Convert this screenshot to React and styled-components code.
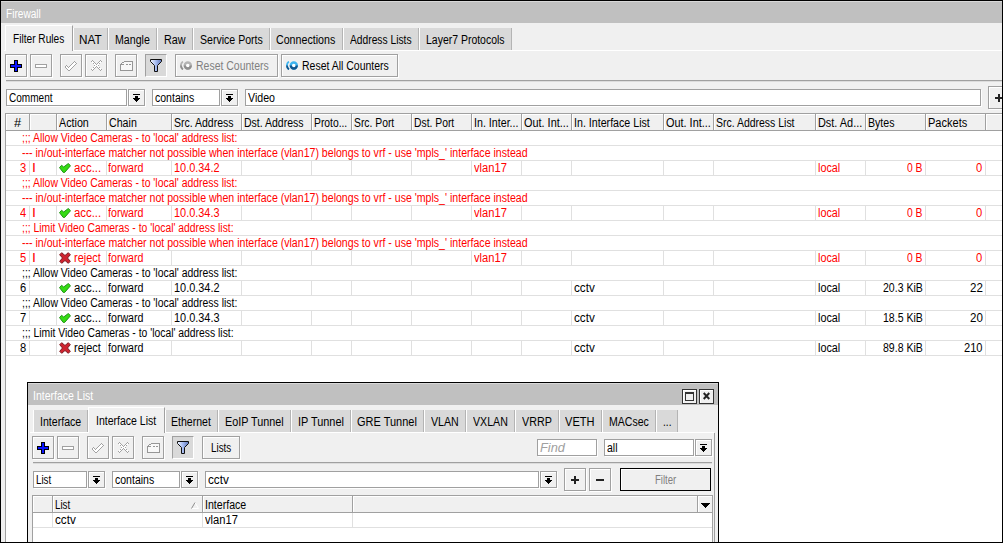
import React, { useLayoutEffect, useRef, useState } from "react";
import styled, { createGlobalStyle, css } from "styled-components";

const Global = createGlobalStyle`
  * { box-sizing: border-box; }
  body {
    margin: 0;
    overflow: hidden;
    background: #fff;
    color: #000;
    font: 12px/14px "Liberation Sans", Arial, sans-serif;
  }
`;

/* ---------- condensed interface text ---------- */

const LabelBox = styled.span`
  display: block;
  flex: none;
  width: ${(p) => p.$w}px;
  white-space: pre;
  font-style: ${(p) => (p.$italic ? "italic" : "normal")};
`;
const LabelInk = styled.span`
  display: inline-block;
  transform-origin: 0 50%;
`;

function Label({ w, italic, children }) {
  const ref = useRef(null);
  const [scale, setScale] = useState(0.85);
  useLayoutEffect(() => {
    const natural = ref.current.offsetWidth;
    if (natural) setScale((w + 0.5) / natural);
  }, [w, children]);
  return (
    <LabelBox $w={w} $italic={italic}>
      <LabelInk ref={ref} style={{ transform: `scaleX(${scale})` }}>
        {children}
      </LabelInk>
    </LabelBox>
  );
}

/* ---------- pixel icons ---------- */

const Svg = styled.svg`
  display: block;
  flex: none;
`;

function Pixels({ rows, colors }) {
  return (
    <Svg width={rows[0].length} height={rows.length} shapeRendering="crispEdges">
      {rows.flatMap((row, y) =>
        [...row].map((c, x) =>
          colors[c] ? <rect key={`${x}-${y}`} x={x} y={y} width="1" height="1" fill={colors[c]} /> : null
        )
      )}
    </Svg>
  );
}

const AddIcon = () => (
  <Svg width="12" height="12" shapeRendering="crispEdges">
    <path d="M4 0h4v4h4v4H8v4H4V8H0V4h4z" fill="#000" />
    <path d="M5 1h2v4h4v2H7v4H5V7H1V5h4z" fill="#0a14ff" />
  </Svg>
);
const RemoveIcon = () => (
  <Svg width="12" height="4" shapeRendering="crispEdges">
    <path d="M.5.5h11v3H.5z" fill="#fff" stroke="#a0a0a0" />
  </Svg>
);
const EnableIcon = () => (
  <Pixels
    colors={{ x: "#a2a2a2", w: "#fff" }}
    rows={[
      ".........x..",
      "........xwx.",
      ".......xwwwx",
      "......xwwwx.",
      ".x...xwwwx..",
      "xwx.xwwwx...",
      "xwwxwwwx....",
      ".xwwwwx.....",
      "..xwwx......",
      "...xx.......",
    ]}
  />
);
const DisableIcon = () => (
  <Pixels
    colors={{ x: "#a2a2a2", w: "#fff" }}
    rows={[
      ".x.......x.",
      "xwx.....xwx",
      ".wwx...xww.",
      "..xwx.xwx..",
      "...wwxww...",
      "...xwwwx...",
      "...wwxww...",
      "..xwx.xwx..",
      ".wwx...xww.",
      "xwx.....xwx",
      ".x.......x.",
    ]}
  />
);
const CommentIcon = () => (
  <Svg width="13" height="10" shapeRendering="crispEdges">
    <path d="M4 0h9v10H0V3h1V2h1V1h2z" fill="#969696" />
    <path d="M4 1h8v8H1V4h3z" fill="#f8f8f8" />
    <path d="M2 2h2v1H2z" fill="#f8f8f8" />
    <path d="M6 3h2v1H6z M9 3h2v1H9z" fill="#969696" />
  </Svg>
);
const FunnelIcon = () => (
  <Svg width="12" height="13">
    <defs>
      <linearGradient id="funnel" x1="0" x2="1">
        <stop offset="0" stopColor="#f2f7ff" />
        <stop offset=".5" stopColor="#a5baf0" />
        <stop offset="1" stopColor="#5e76b8" />
      </linearGradient>
    </defs>
    <path d="M.5.500h11v2L7.500 6.500v6h-3v-6L.5 2.500z" fill="url(#funnel)" stroke="#101010" />
  </Svg>
);
const CounterIcon = ({ color, dark }) => (
  <Svg width="12" height="9">
    <path d="M2.900.6C.2 2.600.2 6.400 2.900 8.400" fill="none" stroke={color} strokeWidth="1.800" />
    <path d="M1 4.500C1 6 1.700 7.500 2.900 8.400" fill="none" stroke={dark} strokeWidth="1.800" />
    <circle cx="7.800" cy="4.500" r="3" fill="#fff" stroke={color} strokeWidth="2.400" />
    <path d="M10.800 4.500a3 3 0 0 1-6 0" fill="none" stroke={dark} strokeWidth="2.300" />
  </Svg>
);
const DropIcon = () => (
  <Svg width="7" height="8" shapeRendering="crispEdges">
    <path d="M0 0h7v1H0z M2 2h3v2h2v1H6v1H5v1H4v1H3V7H2V6H1V5H0V4h2z" fill="#000" />
  </Svg>
);
const PlusGlyph = () => (
  <Svg width="8" height="8" shapeRendering="crispEdges">
    <path d="M3 0h2v3h3v2H5v3H3V5H0V3h3z" fill="#222" />
  </Svg>
);
const MinusGlyph = () => (
  <Svg width="8" height="2" shapeRendering="crispEdges">
    <path d="M0 0h8v2H0z" fill="#222" />
  </Svg>
);
const AcceptIcon = () => (
  <Svg width="12" height="10">
    <path d="M.5 4.600 2.600 2.300 4.700 4 9.300.5l2.200 2.200-5.800 6.700H4.200z" fill="#35dc14" stroke="#23921a" strokeLinejoin="round" />
  </Svg>
);
const RejectIcon = () => (
  <Svg width="12" height="12">
    <path
      d="M.7 2.700 2.700.7 6 3.500 9.300.7l2 2L8.500 6l2.800 3.300-2 2L6 8.500 2.700 11.300l-2-2L3.500 6z"
      fill="#cf2430"
      stroke="#7d1820"
      strokeLinejoin="round"
    />
  </Svg>
);
const SortIcon = () => (
  <Svg width="8" height="7">
    <path d="M4 .5 7.500 6.500H.5" stroke="#fff" fill="none" />
    <path d="M.5 6.500 4 .5" stroke="#8c8c8c" fill="none" />
  </Svg>
);
const MenuArrow = () => (
  <Svg width="9" height="5" shapeRendering="crispEdges">
    <path d="M0 0h9v1H8v1H7v1H6v1H5v1H4V4H3V3H2V2H1V1H0z" fill="#000" />
  </Svg>
);

/* ---------- window parts ---------- */

const Screen = styled.div`
  position: relative;
  width: 1003px;
  height: 543px;
  border: 1px solid #000;
  overflow: hidden;
  background: #f0f0f0;
`;
const FirewallWindow = styled.section`
  display: flex;
  flex-direction: column;
  height: 541px;
`;
const InterfaceWindow = styled.section`
  position: absolute;
  left: 26px;
  top: 381px;
  width: 692px;
  height: 170px;
  border: 1px solid #000;
  background: #f0f0f0;
  display: flex;
  flex-direction: column;
`;
const Panel = styled.div`
  display: flex;
  flex-direction: column;
  flex: 1;
  margin-right: 3px;
  border-right: 1px solid #a0a0a0;
`;
const TitleBar = styled.header`
  display: flex;
  align-items: center;
  flex: none;
  height: ${(p) => p.$h}px;
  padding: ${(p) => p.$pad};
  border-top: 1px solid #d8d8d8;
  background: #c0c0c0;
  color: #fff;
`;
const TitleButtons = styled.div`
  display: flex;
  gap: 2px;
  margin-left: auto;
`;
const TitleButton = styled.div`
  width: 15px;
  height: 15px;
  border: 1px solid #333;
  background: #f0f0f0;
  box-shadow: inset 1px 1px #fff;
  display: flex;
  align-items: center;
  justify-content: center;
`;
const TabStrip = styled.nav`
  display: flex;
  align-items: flex-end;
  flex: none;
  height: ${(p) => p.$h}px;
  padding-left: ${(p) => p.$pad}px;
  margin-left: ${(p) => p.$left}px;
  margin-right: ${(p) => p.$right || 0}px;
  border-bottom: 1px solid #fff;
`;
const Tab = styled.div`
  display: flex;
  flex: none;
  width: ${(p) => p.$w}px;
  height: 22px;
  padding: 5px 0 0 ${(p) => p.$pad}px;
  background: #d9d9d9;
  border-left: 1px solid #fff;
  border-right: 1px solid #b4b4b4;
  ${(p) =>
    p.$active &&
    css`
      height: 26px;
      margin-bottom: -1px;
      padding-top: 6px;
      background: #f0f0f0;
      border-top: 1px solid #fff;
      border-right-color: #a0a0a0;
    `}
`;
const Bar = styled.div`
  display: flex;
  align-items: center;
  flex: none;
  height: ${(p) => p.$h}px;
  padding: ${(p) => p.$pad};
`;
const Rule = styled.div`
  flex: none;
  height: 2px;
  margin: ${(p) => p.$m};
  border-top: 1px solid #a0a0a0;
  border-bottom: 1px solid #dcdcdc;
`;
const Button = styled.div`
  display: flex;
  align-items: center;
  justify-content: ${(p) => (p.$start ? "flex-start" : "center")};
  gap: 4px;
  flex: none;
  width: ${(p) => p.$w || 22}px;
  height: 23px;
  margin-left: ${(p) => p.$gap || 0}px;
  padding-left: ${(p) => (p.$start ? 4 : 0)}px;
  border: 1px solid ${(p) => (p.$strong ? "#000" : "#a0a0a0")};
  background: #f0f0f0;
  color: ${(p) => (p.$muted ? "#808080" : "#000")};
  box-shadow: ${(p) => (p.$strong ? "inset 1px 1px #fff" : "inset 1px 1px #fff, 1px 1px #fff")};
  ${(p) =>
    p.$pressed &&
    css`
      background: #d9d9d9;
      border-color: #a0a0a0 #fff #fff #a0a0a0;
      box-shadow: none;
    `}
`;
const Field = styled.div`
  display: flex;
  align-items: center;
  flex: none;
  width: ${(p) => p.$w}px;
  height: 17px;
  margin-left: ${(p) => p.$gap || 0}px;
  padding-left: 2px;
  border: 1px solid #a0a0a0;
  background: #fff;
  box-shadow: 1px 1px #fff;
  color: ${(p) => (p.$muted ? "#a0a0a0" : "#000")};
`;
const Drop = styled.div`
  display: flex;
  align-items: center;
  justify-content: center;
  flex: none;
  width: 17px;
  height: 17px;
  margin-left: 1px;
  border: 1px solid #a0a0a0;
  background: #f0f0f0;
  box-shadow: inset 1px 1px #fff, 1px 1px #fff;
`;

/* ---------- tables ---------- */

const Table = styled.div`
  flex: 1;
  margin: ${(p) => p.$m};
  border-left: 1px solid #a0a0a0;
  border-right: ${(p) => (p.$closed ? "1px solid #a0a0a0" : "0")};
  background: #fff;
  overflow: hidden;
`;
const HeadRow = styled.div`
  display: flex;
  height: 18px;
  border-top: 1px solid #a0a0a0;
  border-bottom: 1px solid #a0a0a0;
  background: #f0f0f0;
`;
const HeadCell = styled.div`
  display: flex;
  align-items: center;
  flex: ${(p) => (p.$w ? "none" : "1")};
  width: ${(p) => (p.$w ? p.$w + "px" : "auto")};
  padding: 2px 3px 0 ${(p) => p.$pad ?? 2}px;
  border-right: ${(p) => (p.$w ? "1px solid #a0a0a0" : "0")};
  box-shadow: inset 1px 1px #fff;
  overflow: hidden;
`;
const DataRow = styled.div`
  display: flex;
  height: 15px;
  border-bottom: 1px solid #e0e0e0;
  color: ${(p) => (p.$invalid ? "#ff0000" : "#000")};
  ${(p) => p.$note && css`padding-left: 16px;`}
`;
const Cell = styled.div`
  display: flex;
  align-items: center;
  gap: 3px;
  flex: none;
  width: ${(p) => p.$w}px;
  padding: 0 ${(p) => (p.$end ? 3 : 2)}px 0 ${(p) => p.$pad ?? 2}px;
  justify-content: ${(p) => (p.$end ? "flex-end" : "flex-start")};
  border-right: 1px solid #e0e0e0;
  overflow: hidden;
`;
const Spacer = styled.div`
  flex: 1;
`;

const columns = [
  { w: 24, title: "#", tw: 7, pad: 8, key: "num", end: true },
  { w: 27, title: "", tw: 0, key: "flag" },
  { w: 50, title: "Action", tw: 29, key: "action" },
  { w: 65, title: "Chain", tw: 27, key: "chain" },
  { w: 70, title: "Src. Address", tw: 59, key: "src" },
  { w: 70, title: "Dst. Address", tw: 59 },
  { w: 40, title: "Proto...", tw: 33 },
  { w: 60, title: "Src. Port", tw: 40 },
  { w: 60, title: "Dst. Port", tw: 40 },
  { w: 50, title: "In. Inter...", tw: 44, key: "inIf" },
  { w: 50, title: "Out. Int...", tw: 44 },
  { w: 92, title: "In. Interface List", tw: 75, key: "inList" },
  { w: 50, title: "Out. Int...", tw: 44 },
  { w: 102, title: "Src. Address List", tw: 78 },
  { w: 50, title: "Dst. Ad...", tw: 44, key: "dst" },
  { w: 60, title: "Bytes", tw: 26, key: "bytes", end: true },
  { w: 60, title: "Packets", tw: 39, key: "packets", end: true },
];

const widths = {
  I: 3, "acc...": 27, reject: 26, forward: 35, "10.0.34.2": 45, "10.0.34.3": 45, vlan17: 32,
  cctv: 20, local: 22, "0 B": 15, "20.3 KiB": 39, "18.5 KiB": 39, "89.8 KiB": 39, 0: 6, 22: 12, 20: 12, 210: 18,
};

const rules = [
  { num: "3", flag: "I", action: "acc...", src: "10.0.34.2", inIf: "vlan17", bytes: "0 B", packets: "0" },
  { num: "4", flag: "I", action: "acc...", src: "10.0.34.3", inIf: "vlan17", bytes: "0 B", packets: "0" },
  { num: "5", flag: "I", action: "reject", inIf: "vlan17", bytes: "0 B", packets: "0" },
  { num: "6", action: "acc...", src: "10.0.34.2", inList: "cctv", bytes: "20.3 KiB", packets: "22" },
  { num: "7", action: "acc...", src: "10.0.34.3", inList: "cctv", bytes: "18.5 KiB", packets: "20" },
  { num: "8", action: "reject", inList: "cctv", bytes: "89.8 KiB", packets: "210" },
].map((r) => ({ chain: "forward", dst: "local", ...r }));

function FilterRule({ rule }) {
  const invalid = rule.flag === "I";
  const accept = rule.action !== "reject";
  return (
    <>
      <DataRow $note $invalid={invalid}>
        <Label w={accept ? 215 : 211}>
          {`;;; ${accept ? "Allow" : "Limit"} Video Cameras - to 'local' address list:`}
        </Label>
      </DataRow>
      {invalid && (
        <DataRow $note $invalid>
          <Label w={505.500}>
            --- in/out-interface matcher not possible when interface (vlan17) belongs to vrf - use 'mpls_' interface instead
          </Label>
        </DataRow>
      )}
      <DataRow $invalid={invalid}>
        {columns.map((c, i) => (
          <Cell key={i} $w={c.w} $end={c.end} $pad={c.key === "chain" ? 1 : 2}>
            {c.key === "action" && (accept ? <AcceptIcon /> : <RejectIcon />)}
            {rule[c.key] && <Label w={widths[rule[c.key]] || 6}>{rule[c.key]}</Label>}
          </Cell>
        ))}
      </DataRow>
    </>
  );
}

/* tab: title, tab width, left padding, text width */
const firewallTabs = [
  ["Filter Rules", 68, 7, 51, true],
  ["NAT", 35, 5, 22],
  ["Mangle", 49, 6, 34],
  ["Raw", 36, 6, 21],
  ["Service Ports", 77, 6, 62],
  ["Connections", 73, 5, 59],
  ["Address Lists", 76, 6, 61],
  ["Layer7 Protocols", 93, 6, 78],
];
const interfaceTabs = [
  ["Interface", 55, 6, 41],
  ["Interface List", 77, 7, 60, true],
  ["Ethernet", 53, 5, 39],
  ["EoIP Tunnel", 73, 6, 58],
  ["IP Tunnel", 60, 6, 45],
  ["GRE Tunnel", 73, 5, 59],
  ["VLAN", 42, 6, 27],
  ["VXLAN", 49, 6, 34],
  ["VRRP", 44, 6, 29],
  ["VETH", 43, 5, 29],
  ["MACsec", 54, 6, 39],
  ["...", 22, 6, 8],
];

const Tabs = ({ items, ...rest }) => (
  <TabStrip {...rest}>
    {items.map(([name, w, pad, tw, active]) => (
      <Tab key={name} $w={w} $pad={pad} $active={active}>
        <Label w={tw}>{name}</Label>
      </Tab>
    ))}
  </TabStrip>
);

const EditButtons = () => (
  <>
    <Button><AddIcon /></Button>
    <Button $gap={3}><RemoveIcon /></Button>
    <Button $gap={8}><EnableIcon /></Button>
    <Button $gap={3}><DisableIcon /></Button>
    <Button $gap={8}><CommentIcon /></Button>
    <Button $gap={8} $pressed><FunnelIcon /></Button>
  </>
);

export default function App() {
  return (
    <>
      <Global />
      <Screen>
        <FirewallWindow>
          <TitleBar $h={22} $pad="3px 0 0 5px">
            <Label w={34}>Firewall</Label>
          </TitleBar>
          <Tabs items={firewallTabs} $h={28} $pad={1} $left={3} />
          <Bar $h={29} $pad="0 0 0 4px">
            <EditButtons />
            <Button $gap={8} $w={103} $muted $start>
              <CounterIcon color="#b4b4b4" dark="#8f8f8f" />
              <Label w={72}>Reset Counters</Label>
            </Button>
            <Button $gap={3} $w={117} $start>
              <CounterIcon color="#3db4ef" dark="#12558d" />
              <Label w={86}>Reset All Counters</Label>
            </Button>
          </Bar>
          <Rule $m="0 0 0 5px" />
          <Bar $h={31} $pad="0 0 0 5px">
            <Field $w={121}><Label w={43}>Comment</Label></Field>
            <Drop><DropIcon /></Drop>
            <Field $w={68} $gap={7}><Label w={39}>contains</Label></Field>
            <Drop><DropIcon /></Drop>
            <Field $w={736} $gap={7}><Label w={26}>Video</Label></Field>
            <Button $gap={7}><PlusGlyph /></Button>
          </Bar>
          <Table $m="0 0 0 4px">
            <HeadRow>
              {columns.map((c, i) => (
                <HeadCell key={i} $w={c.w} $pad={c.pad}>
                  <Label w={c.tw}>{c.title}</Label>
                </HeadCell>
              ))}
              <HeadCell />
            </HeadRow>
            {rules.map((r) => (
              <FilterRule key={r.num} rule={r} />
            ))}
          </Table>
        </FirewallWindow>

        <InterfaceWindow>
          <TitleBar $h={22} $pad="3px 4px 0 5px">
            <Label w={60}>Interface List</Label>
            <TitleButtons>
              <TitleButton>
                <Svg width="9" height="9" shapeRendering="crispEdges">
                  <path d="M0 0h9v9H0z M1 2v6h7V2z" fillRule="evenodd" fill="#333" />
                </Svg>
              </TitleButton>
              <TitleButton>
                <Svg width="7" height="8">
                  <path d="M.7 1l5.600 6M6.300 1 .7 7" stroke="#222" strokeWidth="2" />
                </Svg>
              </TitleButton>
            </TitleButtons>
          </TitleBar>
          <Tabs items={interfaceTabs} $h={28} $pad={3} $left={2} $right={4} />
          <Panel>
            <Bar $h={29} $pad="0 2px 0 4px">
              <EditButtons />
              <Button $gap={8} $w={38}><Label w={20}>Lists</Label></Button>
              <Spacer />
              <Field $w={60} $muted><Label w={24} italic>Find</Label></Field>
              <Field $w={90} $gap={7}><Label w={10}>all</Label></Field>
              <Drop><DropIcon /></Drop>
            </Bar>
            <Rule $m="0 2px 0 5px" />
            <Bar $h={31} $pad="0 3px 0 5px">
              <Field $w={54}><Label w={15}>List</Label></Field>
              <Drop><DropIcon /></Drop>
              <Field $w={68} $gap={7}><Label w={39}>contains</Label></Field>
              <Drop><DropIcon /></Drop>
              <Field $w={334} $gap={7}><Label w={20}>cctv</Label></Field>
              <Drop><DropIcon /></Drop>
              <Button $gap={7}><PlusGlyph /></Button>
              <Button $gap={3}><MinusGlyph /></Button>
              <Spacer />
              <Button $w={91} $strong $muted><Label w={21}>Filter</Label></Button>
            </Bar>
            <Table $m="0 1px 0 4px" $closed>
              <HeadRow>
                <HeadCell $w={20} />
                <HeadCell $w={150}>
                  <Label w={15}>List</Label>
                  <Spacer />
                  <SortIcon />
                </HeadCell>
                <HeadCell $w={150}><Label w={41}>Interface</Label></HeadCell>
                <HeadCell $w={345} />
                <HeadCell $pad={3}><MenuArrow /></HeadCell>
              </HeadRow>
              <DataRow>
                <Cell $w={20} />
                <Cell $w={150}><Label w={20}>cctv</Label></Cell>
                <Cell $w={150}><Label w={32}>vlan17</Label></Cell>
              </DataRow>
            </Table>
          </Panel>
        </InterfaceWindow>
      </Screen>
    </>
  );
}
